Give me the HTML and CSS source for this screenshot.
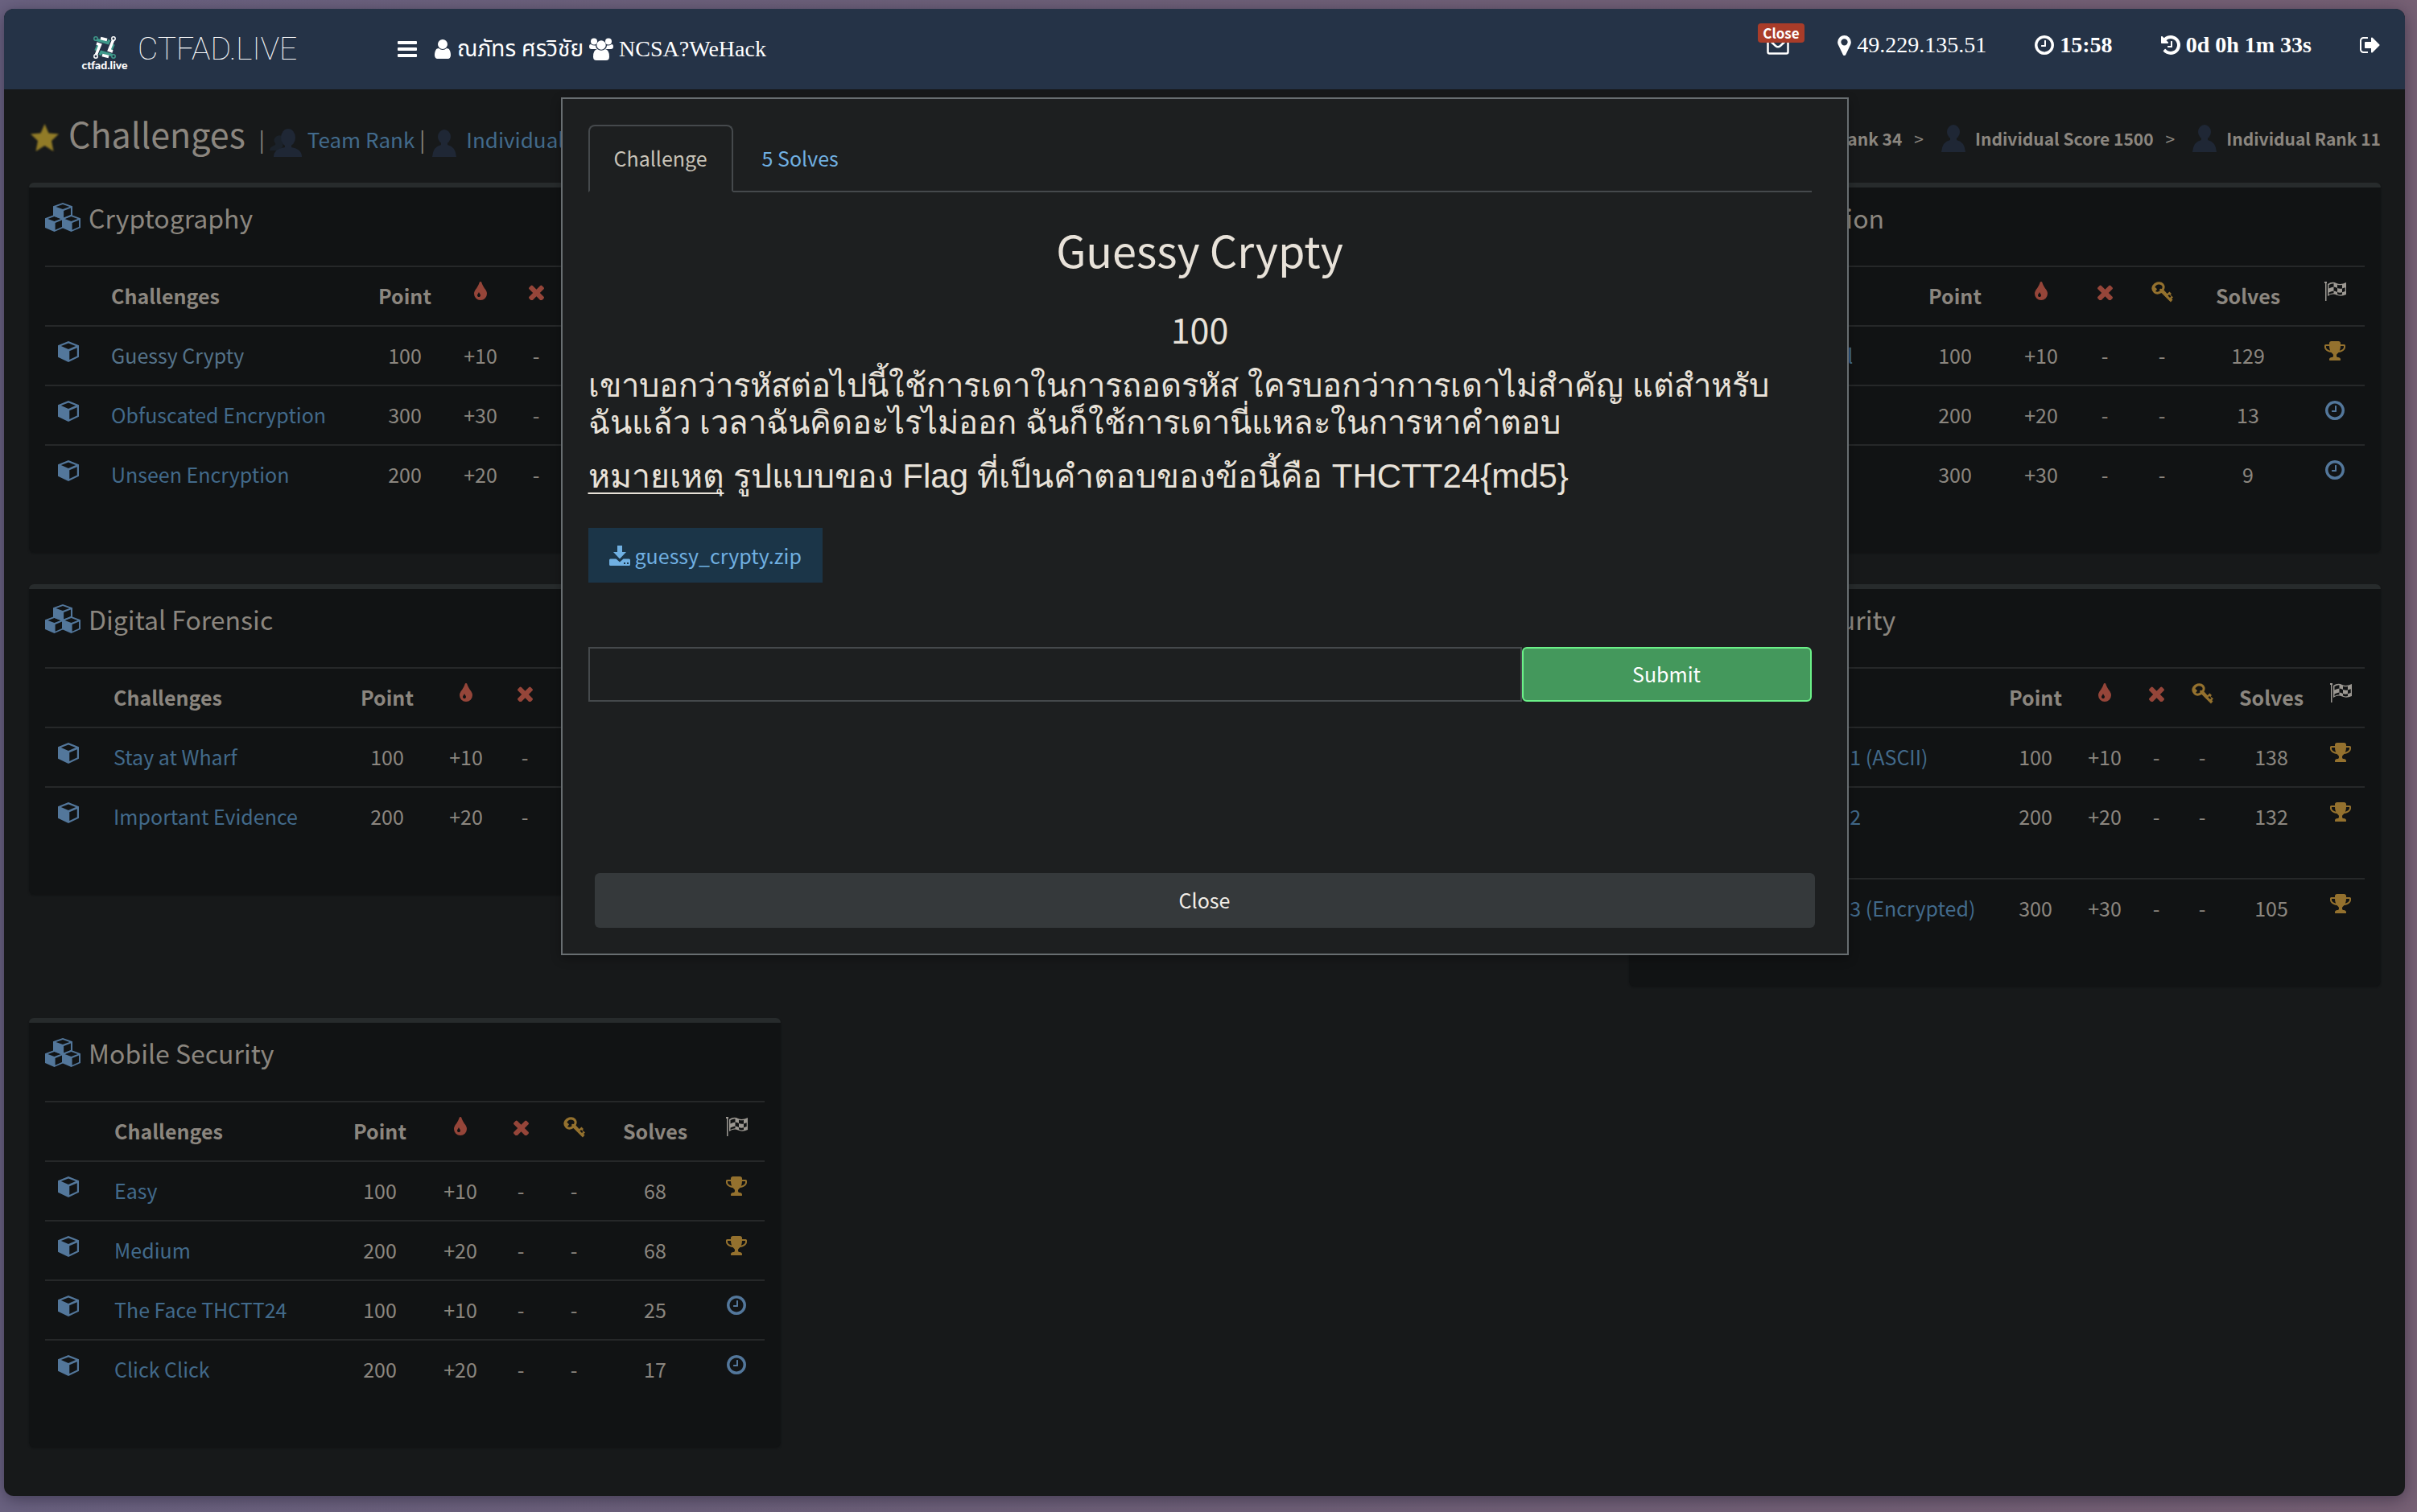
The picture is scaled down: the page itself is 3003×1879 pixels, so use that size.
FILE: index.html
```html
<!DOCTYPE html>
<html lang="th">
<head>
<meta charset="utf-8">
<meta name="viewport" content="width=device-width, initial-scale=1">
<title>CTFAD.LIVE - Challenges</title>
<link rel="stylesheet" href="styles.css">
</head>
<body>
<svg class="sprite" aria-hidden="true">
  <symbol id="i-user" viewBox="256 128 1280 1536"><path d="M1536 1399q0 109-62.5 187t-150.500 78h-854q-88 0-150.500-78t-62.500-187q0-85 8.500-160.500t31.500-152 58.500-131 94-89 134.500-34.500q131 128 313 128t313-128q76 0 134.500 34.500t94 89 58.500 131 31.500 152 8.500 160.500zm-256-887q0 159-112.500 271.500t-271.500 112.500-271.500-112.500-112.500-271.500 112.500-271.500 271.500-112.500 271.500 112.500 112.500 271.500z"/></symbol>
  <symbol id="i-users" viewBox="0 0 30 28"><circle cx="6" cy="4.500" r="4"/><circle cx="24" cy="4.500" r="4"/><circle cx="15" cy="9" r="5.700"/><path d="M2 8q3 2 6 1.500Q8 12 10 14H3Q0 14 0 11Q0 8 2 8zM28 8q-3 2-6 1.500Q22 12 20 14h7q3 0 3-3q0-3-2-3zM10 14q5 3.500 10 0q5 1 5 9.500q0 4.500-4 4.500H9q-4 0-4-4.500Q5 15 10 14z"/></symbol>
  <symbol id="i-clock" viewBox="128 128 1536 1536"><path d="M1024 544v448q0 14-9 23t-23 9h-320q-14 0-23-9t-9-23v-64q0-14 9-23t23-9h224v-352q0-14 9-23t23-9h64q14 0 23 9t9 23zm416 352q0-148-73-273t-198-198-273-73-273 73-198 198-73 273 73 273 198 198 273 73 273-73 198-198 73-273zm224 0q0 209-103 385.500t-279.500 279.500-385.500 103-385.500-103-279.500-279.500-103-385.500 103-385.500 279.500-279.500 385.500-103 385.500 103 279.500 279.500 103 385.500z"/></symbol>
  <symbol id="i-history" viewBox="128 128 1536 1536"><path d="M1664 896q0 156-61 298t-164 245-245 164-298 61q-172 0-327-72.500t-264-204.500q-7-10-6.500-22.500t8.500-20.500l137-138q10-9 25-9 16 2 23 12 73 95 179 147t225 52q104 0 198.500-40.500t163.500-109.500 109.500-163.500 40.500-198.500-40.500-198.500-109.500-163.500-163.500-109.500-198.500-40.500q-98 0-188 35.500t-160 101.500l137 138q31 30 14 69-17 40-59 40h-448q-26 0-45-19t-19-45v-448q0-42 40-59 39-17 69 14l130 129q107-101 244.500-156.500t284.500-55.500q156 0 298 61t245 164 164 245 61 298zm-640-288v448q0 14-9 23t-23 9h-320q-14 0-23-9t-9-23v-64q0-14 9-23t23-9h224v-352q0-14 9-23t23-9h64q14 0 23 9t9 23z"/></symbol>
  <symbol id="i-marker" viewBox="384 128 1024 1536"><path d="M1152 640q0-106-75-181t-181-75-181 75-75 181 75 181 181 75 181-75 75-181zm256 0q0 109-33 179l-364 774q-16 33-47.500 52t-67.500 19-67.500-19-46.500-52l-365-774q-33-70-33-179 0-212 150-362t362-150 362 150 150 362z"/></symbol>
  <symbol id="i-signout" viewBox="64 256 1600 1280"><path d="M704 1440q0 4 1 20t.5 26.500-3 23.500-10 19.500-20.500 6.500h-320q-119 0-203.500-84.500t-84.500-203.500v-704q0-119 84.500-203.500t203.500-84.500h320q13 0 22.500 9.500t9.500 22.500q0 4 1 20t.5 26.500-3 23.500-10 19.500-20.500 6.500h-320q-66 0-113 47t-47 113v704q0 66 47 113t113 47h312l11.500 1 11.500 3 8 5.500 7 9 2 13.500zm928-544q0 26-19 45l-544 544q-19 19-45 19t-45-19-19-45v-288h-448q-26 0-45-19t-19-45v-384q0-26 19-45t45-19h448v-288q0-26 19-45t45-19 45 19l544 544q19 19 19 45z"/></symbol>
  <symbol id="i-times" viewBox="302 302 1188 1188"><path d="M1490 1322q0 40-28 68l-136 136q-28 28-68 28t-68-28l-294-294-294 294q-28 28-68 28t-68-28l-136-136q-28-28-28-68t28-68l294-294-294-294q-28-28-28-68t28-68l136-136q28-28 68-28t68 28l294 294 294-294q28-28 68-28t68 28l136 136q28 28 28 68t-28 68l-294 294 294 294q28 28 28 68z" transform="translate(0 -32)"/></symbol>
  <symbol id="i-tint" viewBox="384 128 1024 1536"><path d="M896 1152q0-36-20-69-1-1-15.500-22.500t-25.500-38-25-44-21-50.500q-4-16-21-16t-21 16q-7 23-21 50.500t-25 44-25.500 38-15.500 22.500q-20 33-20 69 0 53 37.500 90.500t90.500 37.500 90.500-37.500 37.500-90.500zm512-128q0 212-150 362t-362 150-362-150-150-362q0-145 81-275 6-9 62.500-90.500t101-151 99.500-178 83-201.500q9-30 34-47t51-17 51.500 17 33.500 47q28 93 83 201.500t99.500 178 101 151 62.500 90.500q81 127 81 275z" transform="translate(0 64)"/></symbol>
  <symbol id="i-trophy" viewBox="64 128 1664 1536"><path d="M522 883q-74-162-74-371h-256v96q0 78 94.500 162t235.500 113zm1078-275v-96h-256q0 209-74 371 141-29 235.500-113t94.500-162zm128-128v128q0 71-41.500 143t-112 130-173 97.500-215.500 44.500q-42 54-95 95-38 34-52.500 72.500t-14.500 89.500q0 54 30.500 91t97.500 37q75 0 133.500 45.500t58.500 114.500v64q0 14-9 23t-23 9h-832q-14 0-23-9t-9-23v-64q0-69 58.500-114.500t133.500-45.500q67 0 97.500-37t30.500-91q0-51-14.500-89.500t-52.500-72.500q-53-41-95-95-113-5-215.500-44.500t-173-97.500-112-130-41.500-143v-128q0-40 28-68t68-28h288v-96q0-66 47-113t113-47h576q66 0 113 47t47 113v96h288q40 0 68 28t28 68z"/></symbol>
  <symbol id="i-key" viewBox="0 0 27 26"><path fill-rule="evenodd" d="M7 .5Q12-.8 15 2.500Q18 6.500 15.500 10.500L26.500 22.500L24 25.500L12.500 14Q7 17.500 3 14Q-1.500 9.500 1.500 4.500Q3.500 1.500 7 .5zM8.500 3.500Q5 4.500 4.500 7Q6.500 8 7 9.500L5 12Q8 13.500 10.500 11.500Q10 10 10.500 9Q12 8.500 13 9Q14.500 6 12.500 4.500Q10.500 3 8.500 3.500z"/><path d="M17.500 17L22.500 12.500L25 15L23.500 16.500L25.500 18L27 19.500L24 22z"/><path class="cut" d="M20.500 17.500l1.500-1.500 2.500 2.500-1.500 1.500z"/></symbol>
  <symbol id="i-flag" viewBox="0 0 27 24"><path d="M0 0h3v2h-.500v22H1V2H0z"/><path fill-rule="evenodd" d="M4 3Q10-1 15 2Q20 4.500 27 1V16Q20 19 15 16.500Q10 14 4 18zM5.500 4V8.500Q8.500 6.800 11.500 6.500V2.200Q8.500 2.400 5.500 4zM11.500 6.500V11.500Q14 11.500 16 13V8Q14 6.500 11.500 6.500zM16 3.700V8Q19 9.200 22 8.500V4Q19 4.800 16 3.700zM22 8.500V13.200L25.700 12V7.200zM5.500 13.500V16Q8.500 14.500 11.500 14.300V11.500Q8.500 11.800 5.500 13.500zM16 13V15.500Q19 17 22 16V13.200Q19 14.200 16 13z"/></symbol>
  <symbol id="i-cube" viewBox="0 0 27 27" preserveAspectRatio="none"><path fill-rule="evenodd" d="M13.500 0L27 5.500V20.500L13.500 27L0 20.500V5.500zM13.500 2.500L4 6.300L13.500 10.300L23 6.300zM24.700 8.500L14.800 12.700V24L24.700 19.200z"/></symbol>
  <symbol id="i-cubes" viewBox="0 0 44 36"><use href="#i-cube" x="10" y="0" width="24" height="21"/><use href="#i-cube" x="0" y="15" width="23" height="21"/><use href="#i-cube" x="21" y="15" width="23" height="21"/></symbol>
  <symbol id="i-person" viewBox="0 0 30 34"><ellipse cx="15" cy="9" rx="8" ry="9"/><path d="M11 15h8v4q10 2 11 15H0Q1 21 11 19z"/></symbol>
  <symbol id="i-people" viewBox="0 0 40 35"><path class="back" d="M9 9q6-2 9 2l-2 12-6 4H0q0-4 5-6q3-1 2-3q-4-5 2-9z"/><ellipse cx="23" cy="11" rx="9" ry="11"/><path d="M19 18h8v5q13 2 13 12H5q0-10 14-12z"/></symbol>
  <symbol id="i-envelope" viewBox="0 0 28 24"><path d="M1.500 4V20.500Q1.500 22.500 3.500 22.500H24.500Q26.500 22.500 26.500 20.500V4M1.500 4L11 13Q14 15.500 17 13L26.500 4" fill="none" stroke="currentColor" stroke-width="2.500"/></symbol>
  <symbol id="i-download" viewBox="0 0 26 25"><path fill-rule="evenodd" d="M10 0h6v8h5l-8 8.500L5 8h5zM1.500 16.500H8.500L13 20.500L17.500 16.500H24.500Q26 16.500 26 18V23.500Q26 25 24.500 25H1.500Q0 25 0 23.500V18Q0 16.500 1.500 16.500zM18 21v2h2v-2zM22 21v2h2v-2z"/></symbol>
</svg>

<div class="window">
  <header class="topbar">
    <a class="brand" href="#">
      <span class="brand-mark">
        <svg width="28" height="28" viewBox="0 0 28 28" fill="none" stroke-width="3.500">
          <g fill="none" stroke="#3f9a8b"><path d="M3 4L18 8.500L20 4.500"/><path d="M25 24L10 19.500L8 23.500"/><path d="M6 11L3 18"/><path d="M25 10L22 17"/></g>
          <g fill="none" stroke="#fff"><path d="M3 24L8.500 10.500L4 9"/><path d="M25 4L19.500 17.500L24 19"/><path d="M9 2.500L17 4.500"/><path d="M11 23.500L19 25.500"/></g>
          <g stroke-width="1.500" fill="#253347"><circle cx="3" cy="3" r="2.200" stroke="#3f9a8b"/><circle cx="25" cy="25" r="2.200" stroke="#3f9a8b"/><circle cx="25" cy="3" r="2.200" stroke="#fff"/><circle cx="3" cy="25" r="2.200" stroke="#fff"/></g>
        </svg>
        <span class="brand-sub">ctfad.live</span>
      </span>
      <span class="brand-name">CTFAD.LIVE</span>
    </a>
    <button class="menu" type="button" aria-label="Menu"><span></span><span></span><span></span></button>
    <div class="who">
      <svg width="22" height="24"><use href="#i-user"/></svg><span>ณภัทร ศรวิชัย</span>
      <svg width="30" height="28"><use href="#i-users"/></svg><span>NCSA?WeHack</span>
    </div>
    <div class="status">
      <a class="mail" href="#" aria-label="Messages"><svg width="28" height="24"><use href="#i-envelope"/></svg><span class="badge">Close</span></a>
      <span class="stat ip"><svg width="17" height="25"><use href="#i-marker"/></svg>49.229.135.51</span>
      <b class="stat"><svg width="24" height="24"><use href="#i-clock"/></svg>15:58</b>
      <b class="stat"><svg width="24" height="24"><use href="#i-history"/></svg>0d 0h 1m 33s</b>
      <a class="stat" href="#" aria-label="Sign out"><svg width="25" height="20"><use href="#i-signout"/></svg></a>
    </div>
  </header>

  <main class="content">
    <div class="heading">
      <h1><svg class="star" width="35" height="34" viewBox="0 0 35 34"><path d="M17.500 0L22.500 11.500L35 12.500L26 21L28.500 34L17.500 27L6.500 34L9 21L0 12.500L12.500 11.500z" fill="#917b27"/></svg>Challenges</h1>
      <nav class="ranks">
        <span>|</span><a href="#"><svg width="40" height="35"><use href="#i-people"/></svg>Team Rank</a>
        <span>|</span><a class="individual" href="#"><svg width="30" height="34"><use href="#i-person"/></svg>Individual Rank</a>
      </nav>
      <ol class="crumbs">
        <li><svg width="40" height="35"><use href="#i-people"/></svg>Team Rank 34</li>
        <li><svg width="30" height="34"><use href="#i-person"/></svg>Individual Score 1500</li>
        <li><svg width="30" height="34"><use href="#i-person"/></svg>Individual Rank 11</li>
      </ol>
    </div>

    <div class="cards" id="cards">
      <section class="card crypto">
        <h2><svg width="44" height="36"><use href="#i-cubes"/></svg>Cryptography</h2>
        <table>
          <colgroup><col class="c-cube"><col><col class="c-point"><col class="c-blood"><col class="c-wrong"><col class="c-hint"><col class="c-solves"><col class="c-flag"></colgroup>
          <thead><tr><th></th><th class="name">Challenges</th><th>Point</th><th class="ic"><svg class="red" width="16" height="24"><use href="#i-tint"/></svg></th><th class="ic x"><svg class="red" width="19" height="19"><use href="#i-times"/></svg></th><th class="ic"><svg class="gold" width="27" height="26"><use href="#i-key"/></svg></th><th>Solves</th><th class="ic"><svg class="grey" width="27" height="24"><use href="#i-flag"/></svg></th></tr></thead>
          <tbody>
            <tr><td class="ic cube"><svg width="26" height="26"><use href="#i-cube"/></svg></td><td class="name"><a class="seen" href="#">Guessy Crypty</a></td><td>100</td><td>+10</td><td>-</td><td>-</td><td>5</td><td class="ic"><svg class="blue" width="24" height="24"><use href="#i-clock"/></svg></td></tr>
            <tr><td class="ic cube"><svg width="26" height="26"><use href="#i-cube"/></svg></td><td class="name"><a href="#">Obfuscated Encryption</a></td><td>300</td><td>+30</td><td>-</td><td>-</td><td>5</td><td class="ic"><svg class="blue" width="24" height="24"><use href="#i-clock"/></svg></td></tr>
            <tr><td class="ic cube"><svg width="26" height="26"><use href="#i-cube"/></svg></td><td class="name"><a href="#">Unseen Encryption</a></td><td>200</td><td>+20</td><td>-</td><td>-</td><td>5</td><td class="ic"><svg class="blue" width="24" height="24"><use href="#i-clock"/></svg></td></tr>
          </tbody>
        </table>
      </section>

      <section class="card webapp right">
        <h2><svg width="44" height="36"><use href="#i-cubes"/></svg>Web Application</h2>
        <table>
          <colgroup><col class="c-cube"><col><col class="c-point"><col class="c-blood"><col class="c-wrong"><col class="c-hint"><col class="c-solves"><col class="c-flag"></colgroup>
          <thead><tr><th></th><th class="name">Challenges</th><th>Point</th><th class="ic"><svg class="red" width="16" height="24"><use href="#i-tint"/></svg></th><th class="ic x"><svg class="red" width="19" height="19"><use href="#i-times"/></svg></th><th class="ic"><svg class="gold" width="27" height="26"><use href="#i-key"/></svg></th><th>Solves</th><th class="ic"><svg class="grey" width="27" height="24"><use href="#i-flag"/></svg></th></tr></thead>
          <tbody>
            <tr><td class="ic cube"><svg width="26" height="26"><use href="#i-cube"/></svg></td><td class="name"><a href="#">The Web Portal</a></td><td>100</td><td>+10</td><td>-</td><td>-</td><td>129</td><td class="ic"><svg class="gold" width="26" height="24"><use href="#i-trophy"/></svg></td></tr>
            <tr><td class="ic cube"><svg width="26" height="26"><use href="#i-cube"/></svg></td><td class="name"><a href="#">Login</a></td><td>200</td><td>+20</td><td>-</td><td>-</td><td>13</td><td class="ic"><svg class="blue" width="24" height="24"><use href="#i-clock"/></svg></td></tr>
            <tr><td class="ic cube"><svg width="26" height="26"><use href="#i-cube"/></svg></td><td class="name"><a href="#">Admin</a></td><td>300</td><td>+30</td><td>-</td><td>-</td><td>9</td><td class="ic"><svg class="blue" width="24" height="24"><use href="#i-clock"/></svg></td></tr>
          </tbody>
        </table>
      </section>

      <section class="card forensic">
        <h2><svg width="44" height="36"><use href="#i-cubes"/></svg>Digital Forensic</h2>
        <table>
          <colgroup><col class="c-cube"><col><col class="c-point"><col class="c-blood"><col class="c-wrong"><col class="c-hint"><col class="c-solves"><col class="c-flag"></colgroup>
          <thead><tr><th></th><th class="name">Challenges</th><th>Point</th><th class="ic"><svg class="red" width="16" height="24"><use href="#i-tint"/></svg></th><th class="ic x"><svg class="red" width="19" height="19"><use href="#i-times"/></svg></th><th class="ic"><svg class="gold" width="27" height="26"><use href="#i-key"/></svg></th><th>Solves</th><th class="ic"><svg class="grey" width="27" height="24"><use href="#i-flag"/></svg></th></tr></thead>
          <tbody>
            <tr><td class="ic cube"><svg width="26" height="26"><use href="#i-cube"/></svg></td><td class="name"><a href="#">Stay at Wharf</a></td><td>100</td><td>+10</td><td>-</td><td>-</td><td>60</td><td class="ic"><svg class="blue" width="24" height="24"><use href="#i-clock"/></svg></td></tr>
            <tr><td class="ic cube"><svg width="26" height="26"><use href="#i-cube"/></svg></td><td class="name"><a href="#">Important Evidence</a></td><td>200</td><td>+20</td><td>-</td><td>-</td><td>40</td><td class="ic"><svg class="blue" width="24" height="24"><use href="#i-clock"/></svg></td></tr>
          </tbody>
        </table>
      </section>

      <section class="card network right">
        <h2><svg width="44" height="36"><use href="#i-cubes"/></svg>Network Security</h2>
        <table>
          <colgroup><col class="c-cube"><col><col class="c-point"><col class="c-blood"><col class="c-wrong"><col class="c-hint"><col class="c-solves"><col class="c-flag"></colgroup>
          <thead><tr><th></th><th class="name">Challenges</th><th>Point</th><th class="ic"><svg class="red" width="16" height="24"><use href="#i-tint"/></svg></th><th class="ic x"><svg class="red" width="19" height="19"><use href="#i-times"/></svg></th><th class="ic"><svg class="gold" width="27" height="26"><use href="#i-key"/></svg></th><th>Solves</th><th class="ic"><svg class="grey" width="27" height="24"><use href="#i-flag"/></svg></th></tr></thead>
          <tbody>
            <tr><td class="ic cube"><svg width="26" height="26"><use href="#i-cube"/></svg></td><td class="name"><a href="#">Network Traffic 1 (ASCII)</a></td><td>100</td><td>+10</td><td>-</td><td>-</td><td>138</td><td class="ic"><svg class="gold" width="26" height="24"><use href="#i-trophy"/></svg></td></tr>
            <tr><td class="ic cube"><svg width="26" height="26"><use href="#i-cube"/></svg></td><td class="name"><a href="#">Network Traffic 2<br>(Encoded)</a></td><td>200</td><td>+20</td><td>-</td><td>-</td><td>132</td><td class="ic"><svg class="gold" width="26" height="24"><use href="#i-trophy"/></svg></td></tr>
            <tr><td class="ic cube"><svg width="26" height="26"><use href="#i-cube"/></svg></td><td class="name"><a href="#">Network Traffic 3 (Encrypted)</a></td><td>300</td><td>+30</td><td>-</td><td>-</td><td>105</td><td class="ic"><svg class="gold" width="26" height="24"><use href="#i-trophy"/></svg></td></tr>
          </tbody>
        </table>
      </section>

      <section class="card mobile">
        <h2><svg width="44" height="36"><use href="#i-cubes"/></svg>Mobile Security</h2>
        <table>
          <colgroup><col class="c-cube"><col><col class="c-point"><col class="c-blood"><col class="c-wrong"><col class="c-hint"><col class="c-solves"><col class="c-flag"></colgroup>
          <thead><tr><th></th><th class="name">Challenges</th><th>Point</th><th class="ic"><svg class="red" width="16" height="24"><use href="#i-tint"/></svg></th><th class="ic x"><svg class="red" width="19" height="19"><use href="#i-times"/></svg></th><th class="ic"><svg class="gold" width="27" height="26"><use href="#i-key"/></svg></th><th>Solves</th><th class="ic"><svg class="grey" width="27" height="24"><use href="#i-flag"/></svg></th></tr></thead>
          <tbody>
            <tr><td class="ic cube"><svg width="26" height="26"><use href="#i-cube"/></svg></td><td class="name"><a href="#">Easy</a></td><td>100</td><td>+10</td><td>-</td><td>-</td><td>68</td><td class="ic"><svg class="gold" width="26" height="24"><use href="#i-trophy"/></svg></td></tr>
            <tr><td class="ic cube"><svg width="26" height="26"><use href="#i-cube"/></svg></td><td class="name"><a href="#">Medium</a></td><td>200</td><td>+20</td><td>-</td><td>-</td><td>68</td><td class="ic"><svg class="gold" width="26" height="24"><use href="#i-trophy"/></svg></td></tr>
            <tr><td class="ic cube"><svg width="26" height="26"><use href="#i-cube"/></svg></td><td class="name"><a href="#">The Face THCTT24</a></td><td>100</td><td>+10</td><td>-</td><td>-</td><td>25</td><td class="ic"><svg class="blue" width="24" height="24"><use href="#i-clock"/></svg></td></tr>
            <tr><td class="ic cube"><svg width="26" height="26"><use href="#i-cube"/></svg></td><td class="name"><a href="#">Click Click</a></td><td>200</td><td>+20</td><td>-</td><td>-</td><td>17</td><td class="ic"><svg class="blue" width="24" height="24"><use href="#i-clock"/></svg></td></tr>
          </tbody>
        </table>
      </section>
    </div>
  </main>

  <div class="overlay">
    <div class="modal" role="dialog" aria-labelledby="challenge-name">
      <div class="modal-body">
        <nav class="tabs"><a class="tab active" href="#">Challenge</a><a class="tab" href="#">5 Solves</a></nav>
        <h2 class="challenge-name" id="challenge-name">Guessy Crypty</h2>
        <h3 class="challenge-value">100</h3>
        <div class="description">
          <p>เขาบอกว่ารหัสต่อไปนี้ใช้การเดาในการถอดรหัส ใครบอกว่าการเดาไม่สำคัญ แต่สำหรับฉันแล้ว เวลาฉันคิดอะไรไม่ออก ฉันก็ใช้การเดานี่แหละในการหาคำตอบ</p>
          <p class="note"><u>หมายเหตุ</u> รูปแบบของ <span lang="en">Flag</span> ที่เป็นคำตอบของข้อนี้คือ <span lang="en">THCTT24{md5}</span></p>
        </div>
        <a class="file" href="#"><svg width="26" height="25"><use href="#i-download"/></svg>guessy_crypty.zip</a>
        <form class="answer">
          <input type="text" aria-label="Flag">
          <button type="button">Submit</button>
        </form>
      </div>
      <div class="modal-footer"><button class="close" type="button">Close</button></div>
    </div>
  </div>
</div>
</body>
</html>
```
FILE: styles.css
```css
* { box-sizing: border-box; }

body {
  margin: 0;
  min-height: 100vh;
  padding: 11px 15px 20px 5px;
  background: linear-gradient(90deg, #6a6280, #6d6079 40%, #766074);
  color: #8b867f;
  font-family: "Noto Sans CJK SC", "Noto Sans", sans-serif;
  font-size: 25px;
  line-height: 40px;
}

a { color: #426a8b; text-decoration: none; }
h1, h2, h3, p, ol { margin: 0; padding: 0; font-weight: 400; }
button, input { font: inherit; margin: 0; padding: 0; }
svg { fill: currentColor; flex: none; }
.sprite { position: absolute; width: 0; height: 0; }

.window {
  position: relative;
  min-height: calc(100vh - 31px);
  border-radius: 12px;
  background: #17191a;
  box-shadow: 0 4px 20px rgba(20, 15, 35, 0.45);
  overflow: hidden;
}

/* Top bar */
.topbar {
  display: flex;
  align-items: center;
  height: 100px;
  padding: 0 31px 0 93px;
  background: #253347;
  color: #fff;
  font-family: "Liberation Serif", "Noto Sans Thai", serif;
  font-size: 28px;
}
.topbar a { color: #fff; }
.brand { display: flex; align-items: center; gap: 9px; width: 396px; }
.brand-mark { display: flex; flex-direction: column; align-items: center; width: 64px; padding-top: 12px; }
.brand-sub { font: 900 14px/16px Lato, sans-serif; }
.brand-name { font: 100 39px/48px Roboto, sans-serif; }
.menu {
  display: flex;
  flex-direction: column;
  gap: 4px;
  width: 24px;
  border: 0;
  background: none;
}
.menu span { height: 4px; border-radius: 1px; background: #fff; }
.who { display: flex; align-items: center; gap: 7px; margin-left: 21px; }
.status { display: flex; align-items: center; gap: 60px; margin-left: auto; padding-bottom: 10px; }
.stat { display: flex; align-items: center; gap: 7px; }
.mail { position: relative; display: flex; }
.badge {
  position: absolute;
  top: -15px;
  left: -11px;
  padding: 0 6px;
  border-radius: 4px;
  background: #a93c29;
  font: 700 17px/24px "Noto Sans CJK SC", sans-serif;
}

/* Page heading */
.content { padding: 0 30px 61px 31px; }
.heading { display: flex; align-items: baseline; height: 116px; padding-top: 22px; }
h1 { font-size: 43px; line-height: 64px; }
.star { margin: 0 12px 0 2px; vertical-align: -4px; filter: blur(1px); }
.ranks { display: flex; gap: 6px; margin-left: 17px; font-size: 26px; }
.ranks svg { margin-right: 7px; vertical-align: -11px; color: #1f2735; }
.ranks .individual { margin-left: 3px; }
.ranks .individual svg { margin-right: 12px; }
.back { fill: #1b222b; }
.crumbs {
  display: flex;
  align-self: flex-start;
  margin: 14px 0 0 auto;
  font-size: 21px;
  font-weight: 700;
  line-height: 50px;
  list-style: none;
}
.crumbs li { display: flex; align-items: center; gap: 12px; }
.crumbs svg { color: #1f2735; }
.crumbs li + li::before { content: ">"; margin: 0 10px 0 15px; font-weight: 400; }

/* Challenge cards */
.cards {
  display: grid;
  grid-template-columns: repeat(3, 1fr);
  gap: 40px 60px;
  align-items: start;
}
.card {
  grid-column: 1;
  padding: 0 20px 60px;
  border-top: 6px solid #272b2c;
  border-radius: 6px;
  background: #111314;
  box-shadow: 0 2px 2px #121415;
}
.card.right { grid-column: 3; }
.card h2 {
  display: flex;
  align-items: center;
  gap: 10px;
  padding-bottom: 23px;
  font-size: 32px;
  line-height: 74px;
}
.card h2 svg, .cube svg { color: #53779b; }

table { width: 100%; table-layout: fixed; border-collapse: collapse; }
th, td {
  padding: 15px 0 17px;
  border-top: 2px solid #262829;
  vertical-align: top;
  text-align: center;
}
.name { padding-left: 16px; text-align: left; }
.name a.seen { color: #547289; }
.ic { padding: 18px 0 0; line-height: 0; }
.x { padding-top: 22px; }
.cube { padding-left: 16px; text-align: left; }
.red { color: #954539; }
.gold { color: #94712e; }
.grey { color: #9c9892; }
.blue { color: #53779b; }
.cut { fill: #111314; }

.crypto .c-cube { width: 66px; }
.crypto .c-point { width: 118px; }
.crypto .c-blood { width: 70px; }
.crypto .c-wrong { width: 68px; }
.crypto .c-hint { width: 62px; }
.crypto .c-solves { width: 114px; }
.crypto .c-flag { width: 74px; }

.webapp .c-cube { width: 66px; }
.webapp .c-point { width: 126px; }
.webapp .c-blood { width: 88px; }
.webapp .c-wrong { width: 70px; }
.webapp .c-hint { width: 72px; }
.webapp .c-solves { width: 142px; }
.webapp .c-flag { width: 74px; }

.forensic .c-cube { width: 69px; }
.forensic .c-point { width: 114px; }
.forensic .c-blood { width: 82px; }
.forensic .c-wrong { width: 64px; }
.forensic .c-hint { width: 66px; }
.forensic .c-solves { width: 130px; }
.forensic .c-flag { width: 70px; }

.network .c-cube { width: 55px; }
.network .c-point { width: 98px; }
.network .c-blood { width: 74px; }
.network .c-wrong { width: 54px; }
.network .c-hint { width: 60px; }
.network .c-solves { width: 112px; }
.network .c-flag { width: 60px; }

.mobile .c-cube { width: 70px; }
.mobile .c-point { width: 112px; }
.mobile .c-blood { width: 88px; }
.mobile .c-wrong { width: 62px; }
.mobile .c-hint { width: 70px; }
.mobile .c-solves { width: 132px; }
.mobile .c-flag { width: 70px; }

/* Challenge dialog */
.overlay { position: absolute; inset: 0; padding: 110px 20px 0; }
.modal {
  max-width: 1600px;
  margin: 0 auto;
  border: 2px solid #686e71;
  background: #1d1f20;
  color: #e8e2d9;
  box-shadow: 0 4px 12px rgba(0, 0, 0, 0.3);
}
.modal-body { padding: 32px 44px 213px 32px; }
.tabs { display: flex; gap: 4px; border-bottom: 2px solid #45494c; }
.tab {
  margin-bottom: -2px;
  padding: 0 30px 1px;
  border: 2px solid transparent;
  border-radius: 8px 8px 0 0;
  color: #70b0e2;
  line-height: 79px;
}
.tab.active { border-color: #45494c; border-bottom-color: #1d1f20; color: #c8c3b8; }
.challenge-name { margin-top: 42px; font-size: 54px; line-height: 58px; text-align: center; }
.challenge-value { margin-top: 45px; font-size: 43px; line-height: 48px; text-align: center; }
.description {
  margin-top: 24px;
  font-family: "Liberation Sans", sans-serif;
  font-size: 40px;
  line-height: 46px;
}
.description .note { margin-top: 21px; font-size: 41px; }
.description u { text-underline-offset: 6px; text-decoration-thickness: 2px; text-decoration-skip-ink: none; }
.description span { font-size: 42px; }
.file {
  display: inline-flex;
  align-items: center;
  gap: 6px;
  margin-top: 41px;
  padding: 0 26px;
  background: #1b3548;
  color: #70b0e2;
  line-height: 68px;
}
.answer { display: flex; margin-top: 80px; }
.answer input {
  flex: 1;
  min-width: 0;
  height: 68px;
  padding: 0 24px;
  border: 2px solid #45494c;
  background: #1d1f20;
  color: #e8e2d9;
}
.answer button {
  width: 360px;
  padding-bottom: 2px;
  border: 2px solid #6bf188;
  border-radius: 6px;
  background: #44985c;
  color: #fff;
}
.modal-footer { padding: 0 40px 32px; }
.close {
  display: block;
  width: 100%;
  height: 68px;
  padding-bottom: 2px;
  border: 0;
  border-radius: 6px;
  background: #35393b;
  color: #f2eee8;
}
```
